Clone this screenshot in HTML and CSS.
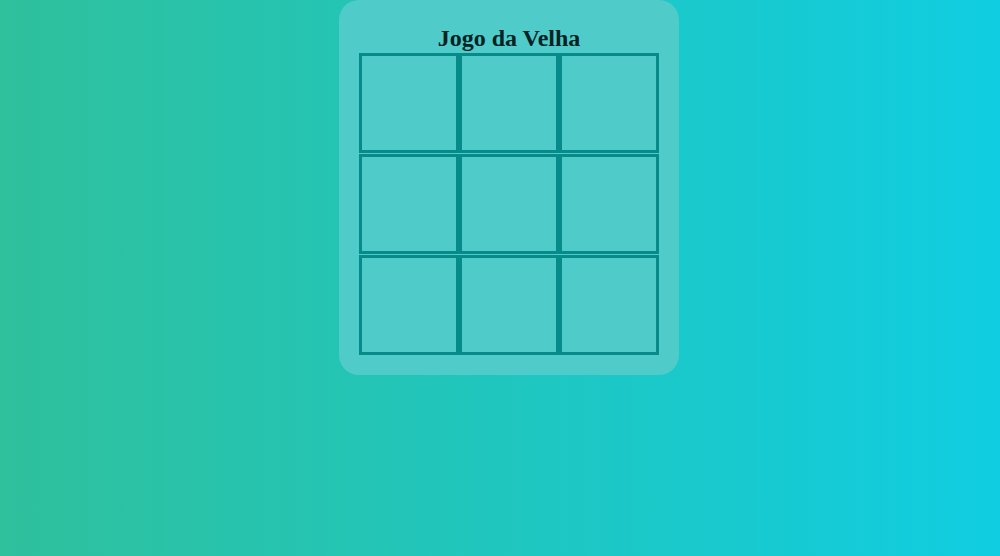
FILE: index.html
```html
<!DOCTYPE html>
<html lang="pt">
<head>
<meta charset="utf-8">
<title>Jogo da Velha</title>
<link rel="stylesheet" href="styles.css">
</head>
<body>
<main class="page">
  <section class="card">
    <h2 class="title">Jogo da Velha</h2>
    <div class="board">
      <div class="cell"></div><div class="cell"></div><div class="cell"></div>
      <div class="cell"></div><div class="cell"></div><div class="cell"></div>
      <div class="cell"></div><div class="cell"></div><div class="cell"></div>
    </div>
  </section>
</main>
</body>
</html>
```
FILE: styles.css
```css
html, body {
  margin: 0;
  height: 100%;
}
body {
  background: linear-gradient(to right, #2fc09c, #10cde1);
  font-family: "Liberation Serif", "Times New Roman", serif;
}
.page {
  display: flex;
  justify-content: center;
  padding-left: 18px;
}
.card {
  background: #4fcbca;
  border-radius: 20px;
  padding: 20px;
  width: 300px;
}
.title {
  margin: 5px 0 1px;
  font-size: 24px;
  font-weight: bold;
  text-align: center;
  color: #012222;
  line-height: normal;
}
.board {
  display: grid;
  grid-template-columns: repeat(3, 100px);
  grid-auto-rows: 100px;
  row-gap: 1px;
}
.cell {
  box-sizing: border-box;
  border: 3px solid #078a8a;
}
```
